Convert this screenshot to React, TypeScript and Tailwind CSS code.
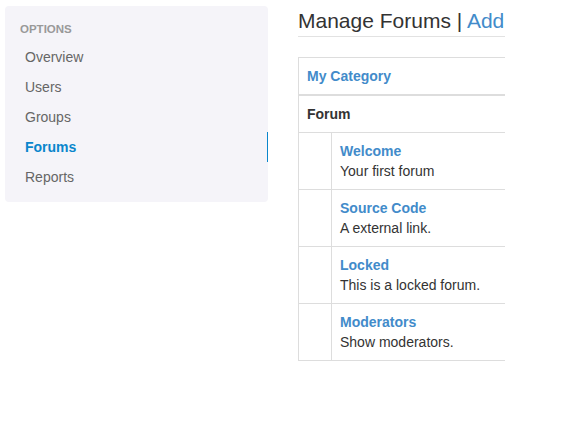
const items = ["Overview", "Users", "Groups", "Forums", "Reports"];

const forums = [
  { name: "Welcome", desc: "Your first forum" },
  { name: "Source Code", desc: "A external link." },
  { name: "Locked", desc: "This is a locked forum." },
  { name: "Moderators", desc: "Show moderators." },
];

const App = () => {
  return (
    <div
      className="flex items-start gap-[30px] pl-[5px] pt-[6px] text-[14px] text-[#333] bg-white min-h-[425px]"
      style={{ fontFamily: '"Liberation Sans", Arial, sans-serif' }}
    >
      <aside className="w-[263px] shrink-0 rounded-[4px] bg-[#f5f4f9] pt-[15px] pb-[10px]">
        <div className="pl-[15px] h-[16px] leading-[16px] text-[11.5px] font-bold uppercase text-[#999]">
          Options
        </div>
        <ul className="mt-[5px]">
          {items.map((item) => (
            <li
              key={item}
              className={
                item === "Forums"
                  ? "h-[30px] leading-[30px] pl-[20px] font-bold text-[#0a86cc] border-r border-[#0a86cc]"
                  : "h-[30px] leading-[30px] pl-[20px] text-[#666]"
              }
            >
              {item}
            </li>
          ))}
        </ul>
      </aside>

      <main className="w-[207px] shrink-0 overflow-hidden -mt-[6px]">
        <h1 className="mt-[9px] pb-[4px] border-b border-[#e2e2e2] text-[21px] leading-[23px] whitespace-nowrap">
          Manage Forums | <span className="text-[#428bca]">Add</span>
        </h1>
        <table className="mt-[20px] w-[420px] border-collapse border border-[#ddd] leading-[20px]">
          <thead>
            <tr>
              <th colSpan={2} className="px-[8px] py-[8px] text-left font-bold text-[#428bca] border-b border-[#ddd]">
                My Category
              </th>
            </tr>
            <tr>
              <th colSpan={2} className="px-[8px] py-[8px] text-left font-bold border-t-2 border-[#ddd]">
                Forum
              </th>
            </tr>
          </thead>
          <tbody>
            {forums.map((f) => (
              <tr key={f.name} className="border-t border-[#ddd]">
                <td className="w-[33px] border-r border-[#ddd] p-[8px]"></td>
                <td className="p-[8px]">
                  <div className="font-bold text-[#428bca]">{f.name}</div>
                  <div>{f.desc}</div>
                </td>
              </tr>
            ))}
          </tbody>
        </table>
      </main>
    </div>
  );
};

export default App;
